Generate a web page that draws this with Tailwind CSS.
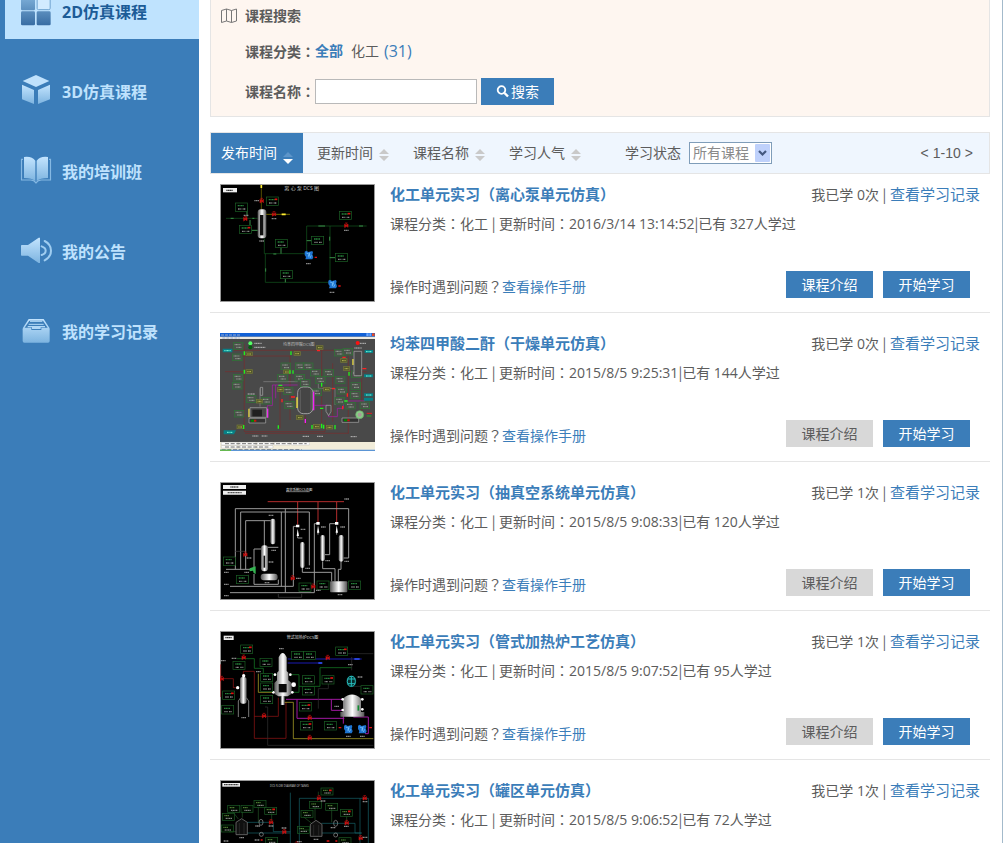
<!DOCTYPE html>
<html lang="zh-CN">
<head>
<meta charset="utf-8">
<meta name="viewport" content="width=device-width, initial-scale=1">
<title>2D仿真课程</title>
<script src="https://cdn.jsdelivr.net/npm/@tailwindcss/browser@4"></script>
</head>
<body class="bg-white font-['Open_Sans','Noto_Sans_CJK_SC',sans-serif] text-sm text-[#5c5c5c]">

<!-- Shared gradients and diagram parts -->
<svg class="absolute size-0" aria-hidden="true">
  <defs>
    <linearGradient id="ice" x1="0" y1="0" x2="0" y2="1"><stop offset="0" stop-color="#c3e4fe"/><stop offset="1" stop-color="#7db4e0"/></linearGradient>
    <linearGradient id="deep" gradientUnits="userSpaceOnUse" x1="0" y1="0" x2="0" y2="94"><stop offset="0" stop-color="#7fb1da"/><stop offset="1" stop-color="#33689f"/></linearGradient>
    <linearGradient id="steel"><stop offset="0" stop-color="#555"/><stop offset=".5" stop-color="#fff"/><stop offset="1" stop-color="#555"/></linearGradient>
    <g id="tag"><rect width="36" height="25" fill="#000" stroke="#1c6226" stroke-width="2"/><path d="M7 8h18" stroke="#26813a" stroke-width="4" stroke-dasharray="4 1"/><path d="M8 18h10M22 18h9" stroke="#888" stroke-width="4" stroke-dasharray="3 1"/></g>
    <g id="tagr"><use href="#tag"/><path d="M25 7h8" stroke="#e01010" stroke-width="5"/></g>
    <g id="valve"><path d="M-5-5L5 5V-5L-5 5zM-5 6L5 -1M0 0V-8M-4-8H4" fill="#e01010" stroke="#c01010" stroke-width="2"/></g>
    <g id="pump"><path d="M0 3l5-3 6 4 12-3 2 5-2 5 3 9-3 6H2l2-7-4-6z" fill="#1d74d2"/><path d="M5 7l10 4-3 9M16 5l-5 12M20 14l-4 8" stroke="#8cd3ff" stroke-width="2" fill="none"/></g>
    <g id="lbl"><path d="M0 0h15" stroke="#888" stroke-width="4" stroke-dasharray="4 1"/></g>
    <g id="gtag"><rect width="29" height="20" fill="#4c504b" stroke="#2b7834" stroke-width="2"/><path d="M4 6h17M9 14h16" stroke="#98a697" stroke-width="3" stroke-dasharray="3 1"/></g>
    <g id="ytag"><rect width="19" height="11" fill="#55582a" stroke="#777a3a" stroke-width="2"/><path d="M4 6h12" stroke="#b5b555" stroke-width="3" stroke-dasharray="3 1"/></g>
    <g id="ttag"><rect width="36" height="21" fill="#030" fill-opacity=".2" stroke="#1c5a26" stroke-width="2"/><path d="M6 7h15" stroke="#5c8e3c" stroke-width="3" stroke-dasharray="4 1"/><path d="M10 15h20" stroke="#999" stroke-width="3" stroke-dasharray="4 1"/></g>
  </defs>
</svg>

<div class="flex h-screen overflow-hidden border-r border-[#a3bacb]">

  <!-- Sidebar -->
  <aside class="w-[199px] shrink-0 bg-[#3b7db9]">
    <nav class="-mt-[15px] flex flex-col gap-[26px] text-base font-bold text-[#bfe2fd]">
      <a href="#" class="ml-[5px] flex h-[54px] items-center gap-[10px] bg-[#bfe3fe] pl-[15px] text-[#1c5c97]" aria-current="page">
        <svg class="size-8 overflow-visible" viewBox="0 0 96 96"><g fill="url(#deep)"><rect x="3" y="1" width="42" height="42" rx="4"/><rect x="3" y="46" width="42" height="42" rx="4"/><rect x="50" y="46" width="42" height="42" rx="4"/></g><rect x="51.500" y="2" width="39" height="39" rx="4" fill="#d2ebff" stroke="#6fa3d0" stroke-width="3"/></svg>
        2D仿真课程
      </a>
      <a href="#" class="flex h-[54px] items-center gap-[10px] pl-5">
        <svg class="size-8 overflow-visible" viewBox="0 0 96 96"><path fill="#bfe1fc" d="M48-3L88 15 48 33 8 15z"/><path fill="url(#ice)" d="M6 26L42 42V84L6 70zM90 26L54 42V84L90 70z"/></svg>
        3D仿真课程
      </a>
      <a href="#" class="flex h-[54px] items-center gap-[10px] pl-5">
        <svg class="size-8 overflow-visible" viewBox="0 0 96 96"><path fill="url(#ice)" d="M12 3Q36 0 46 14V76Q36 66 12 66zM84 3Q60 0 50 14V76Q60 66 84 66z"/><path d="M9 10H4.500V72H32Q42 72 48 81Q54 72 64 72H91.500V10H87" fill="none" stroke="#86b9e3" stroke-width="3.500"/></svg>
        我的培训班
      </a>
      <a href="#" class="flex h-[54px] items-center gap-[10px] pl-5">
        <svg class="size-8 overflow-visible" viewBox="0 0 96 96"><path fill="url(#ice)" d="M5 27H24L56 5H60V81H56L24 59H5Q3 59 3 56V30Q3 27 5 27z"/><g fill="none" stroke="#9fcdf0" stroke-width="6" stroke-linecap="round"><path d="M65 31Q77 35 77 44Q77 53 65 57"/><path d="M74 15Q93 25 93 44Q93 63 74 73"/></g></svg>
        我的公告
      </a>
      <a href="#" class="flex h-[54px] items-center gap-[10px] pl-5">
        <svg class="size-8 overflow-visible" viewBox="0 0 96 96"><path fill="url(#ice)" d="M26 9H71L88 35Q89 37 89 40V75Q89 80 84 80H13Q8 80 8 75V40Q8 37 9 35z"/><path d="M28 14H69L83 35H64V42H34V35H14z" fill="#3b7db9"/><path d="M30 16H67M26 25H71" stroke="#b5dbf8" stroke-width="3"/><path d="M23 30H75V34H62V39H36V34H23z" fill="#b0d7f6"/></svg>
        我的学习记录
      </a>
    </nav>
  </aside>

  <main class="ml-[11px] mr-3 min-w-0 flex-1">

    <!-- Search panel -->
    <section class="border border-t-0 border-[#e5e5e5] bg-[#fef6f0] pb-[11px] pl-[10px]">
      <h2 class="flex h-8 items-center gap-2 font-bold">
        <svg class="h-4 w-4" viewBox="0 0 16 16" fill="none" stroke="#777"><path d="M.5 2.500L5.500 1V13L.5 14.500zM5.500 1L10.500 2.500V14.500L5.500 13M10.500 2.500L15.500 1V13L10.500 14.500"/></svg>
        课程搜索
      </h2>
      <div class="mt-2 flex h-[22px] items-center pl-6">
        <b class="w-[70px]">课程分类<span lang="zh-TW" class="font-['Noto_Sans_CJK_TC',sans-serif]">：</span></b>
        <a href="#" class="font-bold text-[#3b7db9]">全部</a>
        <a href="#" class="ml-2">化工</a>
        <a href="#" class="ml-[5px] text-base text-[#3b7db9]">(31)</a>
      </div>
      <form class="mt-4 flex h-[27px] items-center pl-6">
        <label for="name" class="w-[70px] font-bold">课程名称<span lang="zh-TW" class="font-['Noto_Sans_CJK_TC',sans-serif]">：</span></label>
        <input id="name" type="text" class="h-[25px] w-[162px] border border-[#b9b9b9] bg-white px-1">
        <button type="button" class="ml-1 flex h-[27px] w-[73px] items-center justify-center gap-[2px] bg-[#3b7db9] text-white">
          <svg class="size-[13px]" viewBox="0 0 13 13" fill="none" stroke="#fff"><circle cx="5.500" cy="5" r="3.800" stroke-width="1.800"/><path d="M8.500 8L12 11.500" stroke-width="2.400"/></svg>搜索
        </button>
      </form>
    </section>

    <!-- Sort bar -->
    <div class="mt-[15px] flex h-[42px] items-stretch gap-1 border border-[#e5e5e5] bg-[#eff6fe]">
      <button type="button" class="flex items-center gap-[6px] bg-[#3b7db9] px-[10px] text-white">发布时间
        <svg class="mt-[10px] h-3 w-[10px]" viewBox="0 0 10 12"><path d="M5 0L10 5H0z" fill="#5d95c9"/><path d="M0 7H10L5 12z" fill="#fff"/></svg></button>
      <button type="button" class="flex items-center gap-[6px] px-[10px]">更新时间
        <svg class="mt-1 h-3 w-[10px]" viewBox="0 0 10 12" fill="#c9c9c9"><path d="M5 0L10 5H0zM0 7H10L5 12z"/></svg></button>
      <button type="button" class="flex items-center gap-[6px] px-[10px]">课程名称
        <svg class="mt-1 h-3 w-[10px]" viewBox="0 0 10 12" fill="#c9c9c9"><path d="M5 0L10 5H0zM0 7H10L5 12z"/></svg></button>
      <button type="button" class="flex items-center gap-[6px] px-[10px]">学习人气
        <svg class="mt-1 h-3 w-[10px]" viewBox="0 0 10 12" fill="#c9c9c9"><path d="M5 0L10 5H0zM0 7H10L5 12z"/></svg></button>
      <label for="state" class="ml-[30px] flex items-center">学习状态</label>
      <div class="relative ml-1 self-center">
        <select id="state" class="block h-[22px] w-[83px] appearance-none border border-[#7f9db9] bg-white pl-[3px] text-sm leading-5 text-[#8a8a8a]"><option>所有课程</option></select>
        <svg class="pointer-events-none absolute right-[2px] top-[2px] h-[18px] w-[15px]" viewBox="0 0 15 18"><rect width="15" height="18" rx="1" fill="#bfd1fb"/><path d="M4 7L7.500 10.500L11 7" fill="none" stroke="#44587f" stroke-width="2.200"/></svg>
      </div>
      <div class="ml-auto flex items-center gap-1 pr-4 font-['Liberation_Sans',sans-serif]"><a href="#">&lt;</a><span>1-10</span><a href="#">&gt;</a></div>
    </div>

    <!-- Course list -->
    <article class="flex gap-[15px] border-b border-[#e5e5e5] py-[10px] pl-[10px] pr-[10px]">
      <svg class="h-[118px] w-[155px] shrink-0" viewBox="15 12 465 354" fill="none">
        <path d="M16.500 13.500h462v351h-462z" fill="#000" stroke="#999" stroke-width="3"/>
        <rect x="24" y="24" width="42" height="13" fill="#eee"/><path d="M34 31h20" stroke="#333" stroke-width="4" stroke-dasharray="4 1"/>
        <text x="208" y="31" font-size="15" fill="#ccc">离 心 泵 DCS 图</text>
        <path d="M33 115H128M148 175V221H275V138H455M151 221V307H345V138" stroke="#145a20" stroke-width="2"/>
        <path d="M139 15V88" stroke="#817600" stroke-width="2"/><path d="M153 103H225" stroke="#a89c00" stroke-width="2"/><path d="M139 15v9M200 103h12" stroke="#fe3" stroke-width="5"/>
        <path d="M47 115h9M112 115h6M175 222h9M310 138h20M432 138h12M344 170v12M152 265v10M96 83V110M105 135V120M128 151H110M198 203V221M211 297V307M290 182H275M360 233H344" stroke="#3a8d48" stroke-width="3"/>
        <rect x="128" y="88" width="26" height="87" rx="9" fill="url(#steel)"/><path d="M135 105h10v61h-10z" fill="#111"/>
        <use href="#tag" x="61" y="69"/><use href="#tagr" x="73" y="136"/><use href="#tagr" x="154" y="51"/><use href="#tagr" x="373" y="94"/><use href="#tag" x="181" y="178"/><use href="#tag" x="196" y="271"/><use href="#tag" x="290" y="169"/><use href="#tag" x="361" y="220"/>
        <use href="#valve" x="91" y="117"/><use href="#valve" x="140" y="63"/><use href="#valve" x="177" y="103"/><use href="#valve" x="394" y="137"/>
        <use href="#pump" x="269" y="212"/><use href="#pump" x="340" y="299"/><path d="M299 232h7M370 318h7" stroke="#d11" stroke-width="4"/>
        <use href="#lbl" x="86" y="106"/><use href="#lbl" x="118" y="62"/><use href="#lbl" x="170" y="116"/><use href="#lbl" x="133" y="183"/><use href="#lbl" x="387" y="151"/><use href="#lbl" x="273" y="251"/><use href="#lbl" x="344" y="337"/>
      </svg>
      <div class="flex min-w-0 flex-1 flex-col">
        <div class="flex h-[22px] items-center justify-between"><h3 class="text-[15px] font-bold text-[#3b7db9]"><a href="#">化工单元实习（离心泵单元仿真）</a></h3><p>我已学 0次 <span class="font-['Noto_Sans_CJK_SC',sans-serif]">|</span> <a href="#" class="text-[15px] text-[#3b7db9]">查看学习记录</a></p></div>
        <p class="mt-[6px] leading-[22px]">课程分类<span lang="zh-TW" class="font-['Noto_Sans_CJK_TC',sans-serif]">：</span>化工 <span class="font-['Noto_Sans_CJK_SC',sans-serif]">|</span> 更新时间<span lang="zh-TW" class="font-['Noto_Sans_CJK_TC',sans-serif]">：</span>2016/3/14 13:14:52<span class="font-['Noto_Sans_CJK_SC',sans-serif]">|</span>已有 327人学过</p>
        <div class="mt-auto flex items-center pb-1 pr-[10px]"><p class="flex-1 pt-1">操作时遇到问题<span lang="zh-TW" class="font-['Noto_Sans_CJK_TC',sans-serif]">？</span><a href="#" class="text-[#3b7db9]">查看操作手册</a></p>
          <button type="button" class="mr-[10px] h-[27px] w-[87px] bg-[#3b7db9] text-white">课程介绍</button><button type="button" class="h-[27px] w-[87px] bg-[#3b7db9] text-white">开始学习</button></div>
      </div>
    </article>

    <article class="flex gap-[15px] border-b border-[#e5e5e5] px-[10px] pb-[10px] pt-5">
      <svg class="h-[118px] w-[155px] shrink-0" viewBox="15 14 465 354" fill="none">
        <path d="M15 14h465v354H15z" fill="#494949"/><path d="M15 14h465v11H15z" fill="#1261d6"/><path d="M15 25h465v7H15z" fill="#eeeae0"/><path d="M18 20h60M22 29h52" stroke="#99aacc" stroke-width="3" stroke-dasharray="9 3"/><path d="M454 15h7v8h-7zM463 15h6v8h-6z" fill="#69a6ff"/><path d="M471 15h8v8h-8z" fill="#e44a25"/>
        <path d="M88 48V310H330V275M57 66H400V315H90M57 83H225V275M320 66V290M353 105V280M400 130H455M30 130H88M195 175V300M271 260V290M440 130V260" stroke="#792c2c" stroke-width="2"/>
        <path d="M157 255V232H172V170H248M182 170V210M299 231H340V265H367V240H385V218H450" stroke="#b018b0" stroke-width="2"/>
        <path d="M135 180V235M145 160H248M310 160V180H360V230" stroke="#888" stroke-width="2"/>
        <text x="204" y="52" font-size="12" fill="#bbb">均苯四甲酸DCS图</text>
        <path d="M23 61h29v11H23zM449 65h25v9h-25zM447 138h27v9h-27zM447 195h27v9h-27zM447 208h27v9h-27zM26 306h37l-6 12H26z" fill="#087f86"/><path d="M28 67h20M453 70h17M453 143h17M453 200h17M36 312h17" stroke="#7fd" stroke-width="3" stroke-dasharray="3 1"/>
        <circle cx="106" cy="45" r="6" fill="#5f6"/><circle cx="106" cy="57" r="6" fill="#075d10"/><path d="M118 45h22M118 57h33M434 45h20M418 59h22M98 197h22M112 323h18M140 323h17M263 324h19M306 324h18M407 325h18" stroke="#bbb" stroke-width="3" stroke-dasharray="4 1"/><circle cx="428" cy="44" r="6" fill="#f11"/>
        <use href="#gtag" x="55" y="43"/><use href="#gtag" x="52" y="77"/><use href="#gtag" x="55" y="138"/><use href="#gtag" x="52" y="162"/><use href="#gtag" x="58" y="246"/><use href="#gtag" x="94" y="202"/><use href="#gtag" x="140" y="207"/><use href="#gtag" x="198" y="104"/><use href="#gtag" x="188" y="138"/><use href="#gtag" x="205" y="178"/><use href="#gtag" x="208" y="220"/><use href="#gtag" x="241" y="104"/><use href="#gtag" x="265" y="104"/><use href="#gtag" x="240" y="138"/><use href="#gtag" x="256" y="154"/><use href="#gtag" x="287" y="123"/><use href="#gtag" x="302" y="145"/><use href="#gtag" x="327" y="124"/><use href="#gtag" x="358" y="63"/><use href="#gtag" x="384" y="60"/><use href="#gtag" x="361" y="145"/><use href="#gtag" x="366" y="177"/><use href="#gtag" x="408" y="163"/><use href="#gtag" x="406" y="190"/><use href="#gtag" x="360" y="207"/><use href="#gtag" x="392" y="222"/><use href="#gtag" x="435" y="221"/><use href="#gtag" x="410" y="128"/><use href="#gtag" x="291" y="182"/>
        <use href="#ytag" x="93" y="71"/><use href="#ytag" x="305" y="52"/><use href="#ytag" x="237" y="70"/><use href="#ytag" x="93" y="124"/><use href="#ytag" x="206" y="125"/><use href="#ytag" x="66" y="290"/><use href="#ytag" x="187" y="178"/><use href="#ytag" x="245" y="262"/><use href="#ytag" x="296" y="289"/><use href="#ytag" x="334" y="291"/><use href="#ytag" x="377" y="91"/><use href="#ytag" x="326" y="177"/><use href="#ytag" x="124" y="213"/><use href="#ytag" x="385" y="115"/>
        <path d="M88 69v12M88 124v12M86 290v12M225 126v10M234 126v10M228 69v11M190 171h12M190 291v10M291 290v12M320 163v12M320 286v14M326 289v12M360 290v13M388 218h10M402 130v12M315 240h10" stroke="#1ef31e" stroke-width="4"/>
        <path d="M306 67h9M382 87h10M201 212v10M442 121h12M228 206h12M351 181h9M397 195v10M383 233v10" stroke="#f22" stroke-width="4"/>
        <rect x="248" y="176" width="46" height="80" rx="17" fill="#454545" stroke="#ccc" stroke-width="2"/><path d="M256 184v65M288 184v65" stroke="#999"/><path d="M246 207v32M414 92v18M132 240v12M102 241v26" stroke="#f0de38" stroke-width="4"/><path d="M296 190v56M158 241v27M271 272v12" stroke="#f523f5" stroke-width="4"/>
        <path d="M105 238h50v29h-50zM417 69h23v73h-23zM333 231h15v18l-7 13-8-13zM136 177h7v24h-7z" fill="#484848" stroke="#aaa" stroke-width="2"/><path d="M112 244h29v20h-29z" fill="#202020"/><path d="M102 270h50v14h-50zM381 269h50v13h-50z" fill="#333" stroke="#aaa" stroke-width="2"/><path d="M108 277h15M387 276h10" stroke="#080" stroke-width="6"/><path d="M117 277h7M397 276h7" stroke="#c11" stroke-width="6"/><circle cx="434" cy="259" r="12" fill="#8c8" stroke="#6a6" stroke-width="2"/><circle cx="434" cy="259" r="6" fill="#a99"/><path d="M455 255h16" stroke="#d22" stroke-width="3"/><path d="M455 263h14" stroke="#2a2" stroke-width="3"/>
        <path d="M15 341h465v27H15z" fill="#f2edda"/><path d="M19 342h49v8H19zM71 342h51v8H71zM125 342h49v8h-49zM177 342h48v8h-48zM229 342h54v8h-54zM19 352h49v7H19zM71 352h51v7H71zM125 352h49v7h-49z" fill="#fff" stroke="#aaa"/><path d="M30 346h245M30 356h130M20 364h240" stroke="#777" stroke-width="3" stroke-dasharray="12 5"/><path d="M15 366h465" stroke="#5b95d5" stroke-width="4"/><path d="M15 366h33" stroke="#65b850" stroke-width="4"/>
      </svg>
      <div class="flex min-w-0 flex-1 flex-col">
        <div class="flex h-[22px] items-center justify-between"><h3 class="text-[15px] font-bold text-[#3b7db9]"><a href="#">均苯四甲酸二酐（干燥单元仿真）</a></h3><p>我已学 0次 <span class="font-['Noto_Sans_CJK_SC',sans-serif]">|</span> <a href="#" class="text-[15px] text-[#3b7db9]">查看学习记录</a></p></div>
        <p class="mt-[6px] leading-[22px]">课程分类<span lang="zh-TW" class="font-['Noto_Sans_CJK_TC',sans-serif]">：</span>化工 <span class="font-['Noto_Sans_CJK_SC',sans-serif]">|</span> 更新时间<span lang="zh-TW" class="font-['Noto_Sans_CJK_TC',sans-serif]">：</span>2015/8/5 9:25:31<span class="font-['Noto_Sans_CJK_SC',sans-serif]">|</span>已有 144人学过</p>
        <div class="mt-auto flex items-center pb-1 pr-[10px]"><p class="flex-1 pt-1">操作时遇到问题<span lang="zh-TW" class="font-['Noto_Sans_CJK_TC',sans-serif]">？</span><a href="#" class="text-[#3b7db9]">查看操作手册</a></p>
          <button type="button" class="mr-[10px] h-[27px] w-[87px] bg-[#d8d8d8]">课程介绍</button><button type="button" class="h-[27px] w-[87px] bg-[#3b7db9] text-white">开始学习</button></div>
      </div>
    </article>

    <article class="flex gap-[15px] border-b border-[#e5e5e5] px-[10px] pb-[10px] pt-5">
      <svg class="h-[118px] w-[155px] shrink-0" viewBox="15 12 465 354" fill="none">
        <path d="M16.500 13.500h462v351h-462z" fill="#000" stroke="#999" stroke-width="3"/>
        <path d="M24 21h69v12H24zM24 38h69v12H24z" fill="#eee"/><path d="M46 27h25M38 44h42" stroke="#555" stroke-width="4" stroke-dasharray="4 1"/>
        <text x="213" y="38" font-size="10" fill="#ddd">真空系统DCS总图</text><path d="M213 41h71" stroke="#aaa" stroke-width="2"/>
        <path d="M158 71H387M248 71V140M309 71V132M365 71V132" stroke="#b32c2c" stroke-width="3"/>
        <path d="M61 274V92H401V240H385M77 274V102H283V262M92 273V128H173M148 128V205M199 102V325M211 92V344M45 325H235V145H248M45 344H298V137H309M33 274H112M117 274V213H140M117 288V319H190V305M262 270V283H350V310M323 250V272H360V310M378 250V274H370V310M330 230H344V137H365M154 208H190M248 165V180H262M309 160V170M365 160V170" stroke="#999" stroke-width="3"/>
        <path d="M60 220h30M100 290v25M190 348v10h70v-10" stroke="#444" stroke-width="2"/>
        <g fill="url(#steel)"><rect x="166" y="122" width="15" height="77" rx="7"/><rect x="138" y="202" width="21" height="78" rx="9"/><rect x="137" y="287" width="51" height="20" rx="9"/><rect x="255" y="192" width="14" height="78" rx="7"/><rect x="316" y="171" width="14" height="78" rx="7"/><rect x="371" y="171" width="15" height="80" rx="7"/><rect x="345" y="310" width="52" height="33" rx="3"/></g><path d="M148 233v36" stroke="#111" stroke-width="5"/>
        <path d="M243 140h10v8h-10zM304 132h10v8h-10zM360 132h10v8h-10zM245 174l3-22 4 22zM306 164l3-22 4 22zM362 164l3-22 4 22z" fill="#fff"/>
        <path d="M104 271l18-6v23l-6-3-2-7-10 2z" fill="#35b452"/>
        <use href="#tag" x="25" y="237"/><use href="#tag" x="64" y="292"/><use href="#tag" x="252" y="315"/><use href="#tag" x="306" y="309"/><use href="#tag" x="401" y="309"/>
        <use href="#valve" x="91" y="230"/><use href="#valve" x="233" y="301"/><use href="#valve" x="295" y="326"/>
        <use href="#lbl" x="161" y="112"/><use href="#lbl" x="95" y="240"/><use href="#lbl" x="161" y="252"/><use href="#lbl" x="169" y="217"/><use href="#lbl" x="257" y="154"/><use href="#lbl" x="318" y="147"/><use href="#lbl" x="376" y="147"/><use href="#lbl" x="271" y="271"/><use href="#lbl" x="331" y="248"/><use href="#lbl" x="388" y="250"/><use href="#lbl" x="368" y="350"/><use href="#lbl" x="243" y="301"/><use href="#lbl" x="303" y="337"/><use href="#lbl" x="149" y="314"/><use href="#lbl" x="27" y="283"/><use href="#lbl" x="27" y="319"/><use href="#lbl" x="27" y="353"/><use href="#lbl" x="388" y="63"/><use href="#lbl" x="88" y="283"/>
      </svg>
      <div class="flex min-w-0 flex-1 flex-col">
        <div class="flex h-[22px] items-center justify-between"><h3 class="text-[15px] font-bold text-[#3b7db9]"><a href="#">化工单元实习（抽真空系统单元仿真）</a></h3><p>我已学 1次 <span class="font-['Noto_Sans_CJK_SC',sans-serif]">|</span> <a href="#" class="text-[15px] text-[#3b7db9]">查看学习记录</a></p></div>
        <p class="mt-[6px] leading-[22px]">课程分类<span lang="zh-TW" class="font-['Noto_Sans_CJK_TC',sans-serif]">：</span>化工 <span class="font-['Noto_Sans_CJK_SC',sans-serif]">|</span> 更新时间<span lang="zh-TW" class="font-['Noto_Sans_CJK_TC',sans-serif]">：</span>2015/8/5 9:08:33<span class="font-['Noto_Sans_CJK_SC',sans-serif]">|</span>已有 120人学过</p>
        <div class="mt-auto flex items-center pb-1 pr-[10px]"><p class="flex-1 pt-1">操作时遇到问题<span lang="zh-TW" class="font-['Noto_Sans_CJK_TC',sans-serif]">？</span><a href="#" class="text-[#3b7db9]">查看操作手册</a></p>
          <button type="button" class="mr-[10px] h-[27px] w-[87px] bg-[#d8d8d8]">课程介绍</button><button type="button" class="h-[27px] w-[87px] bg-[#3b7db9] text-white">开始学习</button></div>
      </div>
    </article>

    <article class="flex gap-[15px] border-b border-[#e5e5e5] px-[10px] pb-[10px] pt-5">
      <svg class="h-[118px] w-[155px] shrink-0" viewBox="15 12 465 354" fill="none">
        <path d="M16.500 13.500h462v351h-462z" fill="#000" stroke="#999" stroke-width="3"/>
        <rect x="26" y="26" width="30" height="13" fill="#eee"/><path d="M31 32h19" stroke="#333" stroke-width="4" stroke-dasharray="4 1"/>
        <text x="215" y="35" font-size="12" fill="#ddd">管式加热炉DCS图</text>
        <path d="M66 95H118V124H145V143H185M228 143H252V178H315V122H410M228 196H252V178" stroke="#178829" stroke-width="2"/>
        <path d="M218 96H440M218 108H320" stroke="#1b1bb2" stroke-width="3"/><path d="M418 96h16M310 108h12" stroke="#35f" stroke-width="5"/>
        <path d="M17 112V210M18 155H55V182H68M85 145V133H118V334H213V225M118 268H190V212" stroke="#9d1717" stroke-width="2"/>
        <path d="M130 140V196H182M208 226H235V335H475" stroke="#c6b82d" stroke-width="2"/>
        <path d="M213 217H385M246 217V274H388M349 217V250H385V290M415 270H460V320H450" stroke="#a019a0" stroke-width="3"/>
        <path d="M150 240H158V355H475M340 155V185H310V245M410 130V90M410 178H440M385 80H475" stroke="#333" stroke-width="2"/>
        <g fill="url(#steel)"><path d="M191 91Q203 65 215 91V132L220 137V160L230 168V200L218 208H190L178 200V168L186 160V137L191 132z"/><rect x="197" y="207" width="12" height="27"/><rect x="75" y="150" width="20" height="80" rx="8"/><path d="M384 215Q411 190 438 215V255H448V269H376V255H384z"/></g><path d="M191 171h24v25h-24z" fill="#090909"/><path d="M70 270V222L77 212M101 270V222L94 212" stroke="#777" stroke-width="3"/>
        <g fill="#fff"><circle cx="86" cy="146" r="5"/><circle cx="180" cy="143" r="4"/><circle cx="226" cy="143" r="4"/><circle cx="236" cy="173" r="7"/><circle cx="232" cy="196" r="4"/><circle cx="175" cy="196" r="4"/><circle cx="68" cy="182" r="5"/><circle cx="383" cy="217" r="4"/><circle cx="442" cy="217" r="4"/><circle cx="442" cy="247" r="4"/><circle cx="383" cy="249" r="4"/></g><path d="M430 235v16" stroke="#128b32" stroke-width="5"/>
        <ellipse cx="409" cy="163" rx="15" ry="18" fill="#062b2b"/><path d="M397 163q0-15 12-15t12 15-12 15-12-15zM409 148v30M399 156h21M399 170h21" stroke="#27bcbc" stroke-width="3"/>
        <use href="#tagr" x="77" y="54"/><use href="#tag" x="54" y="103"/><use href="#tag" x="135" y="94"/><use href="#tag" x="230" y="73"/><use href="#tag" x="266" y="73"/><use href="#tagr" x="362" y="60"/><use href="#tag" x="137" y="139"/><use href="#tag" x="137" y="168"/><use href="#tag" x="137" y="205"/><use href="#tag" x="262" y="146"/><use href="#tag" x="262" y="179"/><use href="#tagr" x="321" y="146"/><use href="#tagr" x="23" y="192"/><use href="#tag" x="20" y="236"/><use href="#tag" x="438" y="176"/><use href="#tagr" x="253" y="227"/><use href="#tagr" x="256" y="284"/><use href="#tag" x="328" y="284"/>
        <use href="#valve" x="86" y="92"/><use href="#valve" x="338" y="93"/><use href="#valve" x="20" y="156"/><use href="#valve" x="147" y="267"/><use href="#valve" x="284" y="273"/><use href="#valve" x="284" y="333"/>
        <use href="#pump" x="387" y="293"/><use href="#pump" x="429" y="293"/><path d="M371 302h8M463 302h8" stroke="#d11" stroke-width="4"/>
        <use href="#lbl" x="192" y="65"/><use href="#lbl" x="50" y="94"/><use href="#lbl" x="79" y="272"/><use href="#lbl" x="358" y="238"/><use href="#lbl" x="428" y="150"/><use href="#lbl" x="393" y="328"/><use href="#lbl" x="435" y="328"/><use href="#lbl" x="399" y="113"/><use href="#lbl" x="18" y="101"/><use href="#lbl" x="123" y="134"/>
      </svg>
      <div class="flex min-w-0 flex-1 flex-col">
        <div class="flex h-[22px] items-center justify-between"><h3 class="text-[15px] font-bold text-[#3b7db9]"><a href="#">化工单元实习（管式加热炉工艺仿真）</a></h3><p>我已学 1次 <span class="font-['Noto_Sans_CJK_SC',sans-serif]">|</span> <a href="#" class="text-[15px] text-[#3b7db9]">查看学习记录</a></p></div>
        <p class="mt-[6px] leading-[22px]">课程分类<span lang="zh-TW" class="font-['Noto_Sans_CJK_TC',sans-serif]">：</span>化工 <span class="font-['Noto_Sans_CJK_SC',sans-serif]">|</span> 更新时间<span lang="zh-TW" class="font-['Noto_Sans_CJK_TC',sans-serif]">：</span>2015/8/5 9:07:52<span class="font-['Noto_Sans_CJK_SC',sans-serif]">|</span>已有 95人学过</p>
        <div class="mt-auto flex items-center pb-1 pr-[10px]"><p class="flex-1 pt-1">操作时遇到问题<span lang="zh-TW" class="font-['Noto_Sans_CJK_TC',sans-serif]">？</span><a href="#" class="text-[#3b7db9]">查看操作手册</a></p>
          <button type="button" class="mr-[10px] h-[27px] w-[87px] bg-[#d8d8d8]">课程介绍</button><button type="button" class="h-[27px] w-[87px] bg-[#3b7db9] text-white">开始学习</button></div>
      </div>
    </article>

    <article class="flex gap-[15px] px-[10px] pb-[10px] pt-5">
      <svg class="h-[118px] w-[155px] shrink-0" viewBox="15 15 465 354" fill="none">
        <path d="M16.500 16.500h462v351h-462z" fill="#000" stroke="#999" stroke-width="3"/>
        <rect x="22" y="24" width="53" height="11" fill="#eee"/><path d="M27 29h43" stroke="#444" stroke-width="4" stroke-dasharray="4 1"/>
        <text x="165" y="35" font-size="8" fill="#ccc">DCS FLOW DIAGRAM OF TANKS</text>
        <path d="M226 53V240M95 142H175V170H226M95 174H226M253 240V70H460V240M320 145H420V174H440M320 174H440M435 70V240" stroke="#17656b" stroke-width="2"/>
        <path d="M82 110V128M52 108L70 132M130 96V142M170 115V142M300 96V135M265 125L290 145M350 102V142M395 125V142M310 50V60M42 170H62M265 165H288" stroke="#235425" stroke-width="2"/>
        <path d="M63 142L80 131L97 142V179H63zM286 148L303 136L321 148V184H286z" fill="#101010" stroke="#888" stroke-width="2"/><path d="M73 144V177M87 144V177M296 150V182M311 150V182" stroke="#555"/>
        <g stroke="#999" stroke-width="2"><ellipse cx="138" cy="142" rx="6" ry="9"/><circle cx="139" cy="178" r="6"/><ellipse cx="362" cy="145" rx="6" ry="9"/><circle cx="362" cy="180" r="6"/></g>
        <use href="#ttag" x="38" y="91"/><use href="#ttag" x="78" y="91"/><use href="#ttag" x="117" y="76"/><use href="#ttag" x="149" y="97"/><use href="#ttag" x="22" y="115"/><use href="#ttag" x="19" y="150"/><use href="#ttag" x="283" y="80"/><use href="#ttag" x="318" y="39"/><use href="#ttag" x="258" y="106"/><use href="#ttag" x="332" y="85"/><use href="#ttag" x="376" y="103"/><use href="#ttag" x="247" y="154"/><use href="#ttag" x="152" y="187"/><use href="#ttag" x="372" y="188"/>
        <path d="M172 103h8M342 46h8M399 109h8M335 198h8M137 195h6M361 198h6" stroke="#d11" stroke-width="5"/>
        <use href="#valve" x="168" y="142"/><use href="#valve" x="208" y="171"/><use href="#valve" x="312" y="70"/><use href="#valve" x="449" y="70"/><use href="#valve" x="395" y="144"/><use href="#valve" x="437" y="190"/><use href="#valve" x="246" y="208"/>
        <use href="#lbl" x="73" y="188"/><use href="#lbl" x="121" y="153"/><use href="#lbl" x="161" y="153"/><use href="#lbl" x="200" y="159"/><use href="#lbl" x="317" y="78"/><use href="#lbl" x="443" y="80"/><use href="#lbl" x="347" y="158"/><use href="#lbl" x="387" y="154"/><use href="#lbl" x="296" y="193"/><use href="#lbl" x="26" y="198"/><use href="#lbl" x="443" y="187"/><use href="#lbl" x="119" y="195"/><use href="#lbl" x="246" y="200"/>
      </svg>
      <div class="flex min-w-0 flex-1 flex-col">
        <div class="flex h-[22px] items-center justify-between"><h3 class="text-[15px] font-bold text-[#3b7db9]"><a href="#">化工单元实习（罐区单元仿真）</a></h3><p>我已学 1次 <span class="font-['Noto_Sans_CJK_SC',sans-serif]">|</span> <a href="#" class="text-[15px] text-[#3b7db9]">查看学习记录</a></p></div>
        <p class="mt-[6px] leading-[22px]">课程分类<span lang="zh-TW" class="font-['Noto_Sans_CJK_TC',sans-serif]">：</span>化工 <span class="font-['Noto_Sans_CJK_SC',sans-serif]">|</span> 更新时间<span lang="zh-TW" class="font-['Noto_Sans_CJK_TC',sans-serif]">：</span>2015/8/5 9:06:52<span class="font-['Noto_Sans_CJK_SC',sans-serif]">|</span>已有 72人学过</p>
      </div>
    </article>
  </main>
</div>
</body>
</html>
